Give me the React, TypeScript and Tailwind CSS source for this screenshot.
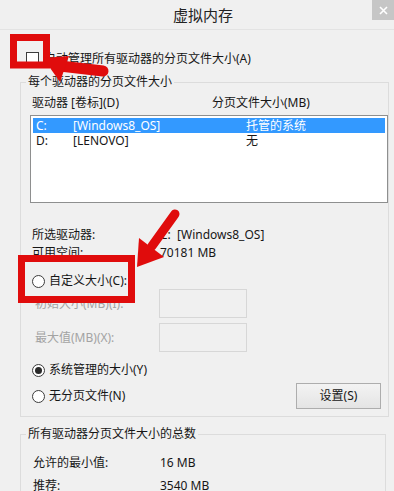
import React from 'react';

const Radio: React.FC<{ checked?: boolean }> = ({ checked }) => (
  <span className="w-[13px] h-[13px] rounded-full border border-[#3c3c3c] bg-white flex items-center justify-center shrink-0">
    {checked && <span className="w-[7px] h-[7px] rounded-full bg-[#2a2a2a]" />}
  </span>
);

const Annotations = () => (
  <svg className="absolute inset-0 pointer-events-none" width="394" height="491" viewBox="0 0 394 491">
    <g fill="none" stroke="#e00c0c" strokeWidth="7">
      <rect x="13.5" y="37.5" width="33" height="27.5" />
      <rect x="21.5" y="258.5" width="110" height="41" />
    </g>
    <g stroke="#e00c0c" strokeLinecap="round">
      <line x1="60" y1="66" x2="103" y2="71" strokeWidth="11" />
      <line x1="175" y1="214" x2="152" y2="246" strokeWidth="9" />
    </g>
    <g fill="#e00c0c">
      <polygon points="43,58 69,56 60,82" />
      <polygon points="137,267 139,238 164,257" />
    </g>
  </svg>
);

export default function App() {
  return (
    <div className="relative w-[394px] h-[491px] overflow-hidden bg-[#f0f0f0] text-[12px] leading-[14px] text-[#161616] font-['Noto_Sans','Noto_Sans_CJK_SC',sans-serif]">
      {/* title bar */}
      <div className="relative h-[30px] border-b border-[#e3e3e3] flex items-center justify-center pl-[12px] text-[15px] text-[#222]">
        虚拟内存
        <div className="absolute top-0 right-0 w-[22px] h-[20px] bg-[#c6c6c6] flex items-center justify-center">
          <svg width="9" height="9" viewBox="0 0 9 9"><path d="M1 1L8 8M8 1L1 8" stroke="#fff" strokeWidth="1.6" /></svg>
        </div>
      </div>

      <div className="mt-[22px] pl-[26px] flex items-center gap-[5px] h-[13px]">
        <span className="w-[13px] h-[13px] border border-[#3c3c3c] bg-white shrink-0" />
        <span>自动管理所有驱动器的分页文件大小(A)</span>
      </div>

      <fieldset className="mt-[10px] ml-[20px] w-[366px] border border-[#dcdcdc] pb-[7px]">
        <legend className="ml-[5px] px-[2px]">每个驱动器的分页文件大小</legend>
        <div className="mt-[7px] pl-[11px] flex h-[14px]">
          <span className="w-[180px]">驱动器 [卷标](D)</span>
          <span>分页文件大小(MB)</span>
        </div>
        <div className="mt-[5px] ml-[9px] w-[358px] h-[88px] border border-[#8e8f8f] bg-white p-[2px]">
          <div className="flex h-[15px] items-center bg-[#3399ff] text-white pl-[3px] leading-[13px]">
            <span className="w-[37px]">C:</span>
            <span className="w-[173px]">[Windows8_OS]</span>
            <span>托管的系统</span>
          </div>
          <div className="flex h-[15px] items-center pl-[3px] leading-[13px]">
            <span className="w-[37px]">D:</span>
            <span className="w-[173px]">[LENOVO]</span>
            <span>无</span>
          </div>
        </div>

        <div className="mt-[25px] pl-[11px] flex">
          <span className="w-[128px]">所选驱动器:</span>
          <span>C:&nbsp; [Windows8_OS]</span>
        </div>
        <div className="mt-[4px] pl-[11px] flex">
          <span className="w-[128px]">可用空间:</span>
          <span>70181 MB</span>
        </div>

        <div className="mt-[14px] pl-[11px] flex items-center gap-[4px] h-[14px]">
          <Radio />
          <span>自定义大小(C):</span>
        </div>
        <div className="mt-[1px] pl-[14px] flex items-center text-[#a3a3a3]">
          <span className="w-[124px]">初始大小(MB)(I):</span>
          <span className="w-[88px] h-[29px] border border-[#d7d7d7]" />
        </div>
        <div className="mt-[5px] pl-[14px] flex items-center text-[#a3a3a3]">
          <span className="w-[124px]">最大值(MB)(X):</span>
          <span className="w-[88px] h-[29px] border border-[#d7d7d7]" />
        </div>

        <div className="mt-[11px] pl-[11px] flex items-center gap-[4px] h-[14px]">
          <Radio checked />
          <span>系统管理的大小(Y)</span>
        </div>
        <div className="mt-[6px] pl-[11px] pr-[7px] flex items-center h-[26px]">
          <Radio />
          <span className="ml-[4px]">无分页文件(N)</span>
          <button className="ml-auto w-[85px] h-[26px] border border-[#adadad] bg-gradient-to-b from-[#f3f3f3] to-[#e4e4e4] text-[#161616]">
            设置(S)
          </button>
        </div>
      </fieldset>

      <fieldset className="mt-[10px] ml-[20px] w-[366px] h-[80px] border border-[#dcdcdc]">
        <legend className="ml-[5px] px-[2px]">所有驱动器分页文件大小的总数</legend>
        <div className="mt-[15px] pl-[12px] flex">
          <span className="w-[127px]">允许的最小值:</span>
          <span>16 MB</span>
        </div>
        <div className="mt-[9px] pl-[12px] flex">
          <span className="w-[127px]">推荐:</span>
          <span>3540 MB</span>
        </div>
      </fieldset>

      <Annotations />
    </div>
  );
}
